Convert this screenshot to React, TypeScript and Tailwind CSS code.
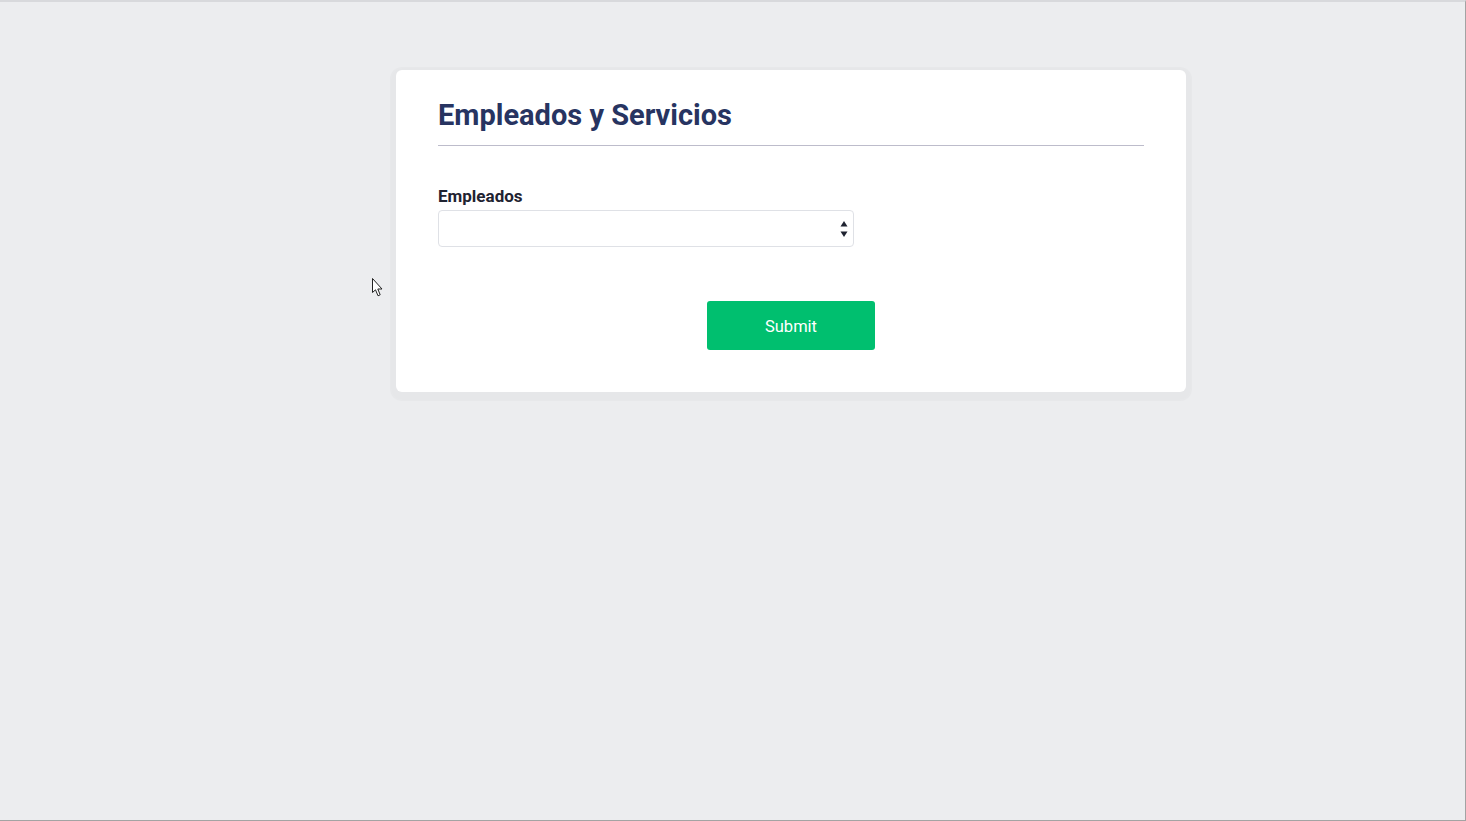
import React from "react";

export default function App() {
  return (
    <div
      className="relative w-full h-[821px] bg-[#ecedef] border-t-2 border-t-[#d8d9dc] border-r border-r-[#a3a3a3] border-b border-b-[#a3a3a3] overflow-hidden"
      style={{ fontFamily: "Roboto, 'Noto Sans', sans-serif" }}
    >
      <div className="pt-[68px] pl-[396px]">
        <div className="w-[790px] bg-white rounded-[6px] shadow-[0_3px_1px_6px_rgba(0,0,0,0.024)] px-[42px] pt-[27px] pb-[42px]">
          <div className="border-b border-b-[#bdbccb] pb-[12px]">
            <h1 className="text-[29px] leading-[36px] font-bold text-[#273461]">
              Empleados y Servicios
            </h1>
          </div>
          <div className="mt-[38px]">
            <label className="block text-[17px] leading-[24px] font-bold text-[#1f2331] mb-[2px]">
              Empleados
            </label>
            <div className="relative w-[416px] h-[37px] border border-[#dfe1e6] rounded-[4px] bg-white">
              <svg
                className="absolute right-[5px] top-[9px]"
                width="8"
                height="18"
                viewBox="0 0 8 18"
              >
                <path d="M4 1 L7.5 6.5 L0.5 6.5 Z" fill="#1f2331" />
                <path d="M4 17 L7.5 11.5 L0.5 11.5 Z" fill="#1f2331" />
              </svg>
            </div>
          </div>
          <div className="mt-[54px] flex justify-center">
            <button className="w-[168px] h-[49px] pt-[2px] bg-[#00bf6f] rounded-[3px] text-white text-[16.5px] leading-[24px]">
              Submit
            </button>
          </div>
        </div>
      </div>
      <svg
        className="absolute left-[371px] top-[275px]"
        width="14"
        height="21"
        viewBox="0 0 14 21"
      >
        <path
          d="M1.5 1.5 L1.5 15.5 L4.5 12.8 L7 18.8 L9.2 17.8 L6.8 12 L11 12 Z"
          fill="white"
          stroke="#222"
          strokeWidth="1"
          strokeLinejoin="miter"
        />
      </svg>
    </div>
  );
}
